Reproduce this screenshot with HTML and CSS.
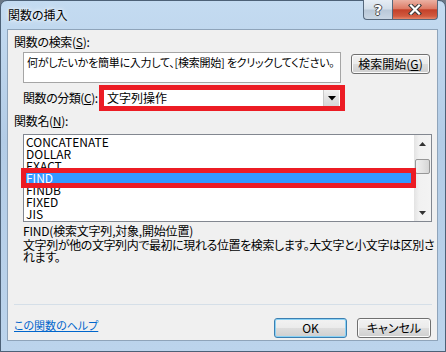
FILE: index.html
```html
<!DOCTYPE html>
<html lang="ja">
<head>
    <meta charset="UTF-8">
    <title>関数の挿入</title>
    <link rel="stylesheet" href="styles.css">
</head>
<body>

    <div class="window">
        <div class="titlebar">
            <span class="title">関数の挿入</span>
            <div class="caption-buttons">
                <span class="caption-btn help-btn">?</span>
                <span class="caption-btn close-btn">
                    <svg width="14" height="11" viewBox="0 0 14 11">
                        <path d="M3 1.5 L11 9.5 M11 1.5 L3 9.5" stroke="#3a3a3a" stroke-width="4.2" stroke-linecap="square"/>
                        <path d="M3 1.5 L11 9.5 M11 1.5 L3 9.5" stroke="#fff" stroke-width="2.2" stroke-linecap="square"/>
                    </svg>
                </span>
            </div>
        </div>

        <div class="client">
            <div class="label search-label">関数の検索(<u>S</u>):</div>

            <div class="search-row">
                <div class="search-box">何がしたいかを簡単に入力して、[検索開始] をクリックしてください。</div>
                <button class="btn search-btn">検索開始(<u>G</u>)</button>
            </div>

            <div class="category-row">
                <span class="label category-label">関数の分類(<u>C</u>):</span>
                <div class="mark">
                    <div class="combo">
                        <span class="combo-text">文字列操作</span>
                        <span class="combo-drop">
                            <svg width="8" height="5" viewBox="0 0 8 5"><polygon points="0,0 8,0 4,4.5" fill="#000"/></svg>
                        </span>
                    </div>
                </div>
            </div>

            <div class="label list-label">関数名(<u>N</u>):</div>

            <div class="listbox">
                <ul class="items">
                    <li>CONCATENATE</li>
                    <li>DOLLAR</li>
                    <li>EXACT</li>
                    <li class="selected">FIND</li>
                    <li>FINDB</li>
                    <li>FIXED</li>
                    <li>JIS</li>
                </ul>
                <div class="scrollbar">
                    <span class="scroll-arrow">
                        <svg width="7" height="4" viewBox="0 0 7 4"><polygon points="0,4 7,4 3.5,0" fill="#333"/></svg>
                    </span>
                    <span class="scroll-track"><span class="scroll-thumb"></span></span>
                    <span class="scroll-arrow">
                        <svg width="7" height="4" viewBox="0 0 7 4"><polygon points="0,0 7,0 3.5,4" fill="#333"/></svg>
                    </span>
                </div>
                <div class="mark mark-row"></div>
            </div>

            <div class="signature">FIND(検索文字列,対象,開始位置)</div>
            <div class="description">文字列が他の文字列内で最初に現れる位置を検索します。大文字と小文字は区別さ<br>れます。</div>

            <div class="separator"></div>

            <div class="footer">
                <a class="help-link" href="#">この関数のヘルプ</a>
                <button class="btn btn-default ok-btn">OK</button>
                <button class="btn cancel-btn">キャンセル</button>
            </div>
        </div>
    </div>

</body>
</html>
```

FILE: styles.css
```css
* {
    box-sizing: border-box;
}

body {
    margin: 0;
    font-family: "Noto Sans CJK JP", sans-serif;
    font-size: 12px;
    font-feature-settings: "palt";
    color: #000;
    background-color: #6b7886;
}

.window {
    width: 446px;
    height: 352px;
    display: flex;
    flex-direction: column;
    padding: 0 7px 10px 6px;
    border: 1px solid #4d6177;
    border-radius: 7px 7px 0 0;
    background: linear-gradient(180deg, #c4dbf1 0%, #b3cce6 40%, #bcd4ec 100%);
}

.titlebar {
    height: 28px;
    display: flex;
    justify-content: space-between;
    align-items: flex-start;
}

.title {
    margin: 6px 0 0 1px;
    line-height: 16px;
    text-shadow: 0 0 6px #fff, 0 0 3px #fff;
}

.caption-buttons {
    display: flex;
    margin-top: -1px;
}

.caption-btn {
    height: 20px;
    display: flex;
    align-items: center;
    justify-content: center;
    border: 1px solid #56687c;
    border-top: none;
}

.help-btn {
    width: 29px;
    border-right: none;
    border-radius: 0 0 0 4px;
    background: linear-gradient(180deg, #e6edf5 0%, #d3dee9 48%, #b9c8d8 52%, #c9d6e4 100%);
    color: #fff;
    font-family: "DejaVu Sans", sans-serif;
    font-weight: bold;
    font-size: 14px;
    text-shadow: -1px 0 #4a4a4a, 1px 0 #4a4a4a, 0 -1px #4a4a4a, 0 1px #4a4a4a;
}

.close-btn {
    width: 46px;
    border-radius: 0 0 4px 0;
    background: linear-gradient(180deg, #ebb1a3 0%, #dd7b66 45%, #c4412a 52%, #d15a3f 85%, #e7876b 100%);
}

.client {
    flex: 1;
    display: flex;
    flex-direction: column;
    padding: 0 5px 2px 6px;
    border: 1px solid #8fa4ba;
    background-color: #f0f0f0;
}

.label {
    line-height: 14px;
    letter-spacing: -0.3px;
    white-space: nowrap;
}

.search-label {
    margin-top: 5px;
}

.search-row {
    display: flex;
    align-items: flex-start;
    margin-top: 3px;
}

.search-box {
    width: 318px;
    height: 31px;
    margin-left: 9px;
    padding: 2px 3px;
    font-size: 11px;
    line-height: 14px;
    white-space: nowrap;
    letter-spacing: -0.25px;
    background-color: #fff;
    border: 1px solid #a5a5a5;
}

.btn {
    height: 20px;
    padding: 0;
    font-family: inherit;
    font-size: 12px;
    font-feature-settings: "palt";
    line-height: 16px;
    color: #000;
    border: 1px solid #707070;
    border-radius: 3px;
    box-shadow: inset 0 0 0 1px #fbfbfb;
    background: linear-gradient(180deg, #f2f2f2 0%, #ebebeb 48%, #dddddd 52%, #cfcfcf 100%);
}

.search-btn {
    width: 79px;
    margin: 2px 0 0 10px;
}

.category-row {
    display: flex;
    align-items: center;
    margin-top: 2px;
    height: 26px;
}

.category-label {
    width: 76px;
    margin-left: 9px;
    letter-spacing: -0.45px;
}

.mark {
    border: 5px solid #ec1c24;
}

.combo {
    width: 236px;
    height: 16px;
    display: flex;
    justify-content: space-between;
    background-color: #fff;
}

.combo-text {
    padding-left: 3px;
    line-height: 16px;
}

.combo-drop {
    width: 16px;
    height: 16px;
    margin-right: 1px;
    display: flex;
    align-items: center;
    justify-content: center;
    background: linear-gradient(180deg, #f2f2f2 0%, #e3e3e3 50%, #d6d6d6 100%);
    border-left: 1px solid #c9c9c9;
}

.list-label {
    margin-top: 3px;
}

.listbox {
    position: relative;
    width: 409px;
    height: 88px;
    margin: 6px 0 0 9px;
    display: flex;
    border: 1px solid #828790;
    background-color: #fff;
}

.items {
    list-style: none;
    margin: 0;
    padding: 1px 0 0 0;
    width: 390px;
}

.items li {
    height: 12px;
    line-height: 12px;
    padding-left: 2px;
}

.items li.selected {
    background-color: #3399ff;
    color: #fff;
}

.scrollbar {
    width: 17px;
    display: flex;
    flex-direction: column;
    background: linear-gradient(90deg, #e3e3e3 0%, #f1f1f1 30%, #f3f3f3 100%);
}

.scroll-arrow {
    height: 17px;
    display: flex;
    align-items: center;
    justify-content: center;
}

.scroll-track {
    flex: 1;
    padding: 7px 1px 0 1px;
}

.scroll-thumb {
    display: block;
    height: 15px;
    border: 1px solid #979797;
    border-radius: 2px;
    background: linear-gradient(90deg, #f0f0f0 0%, #e4e4e4 50%, #d6d6d6 100%);
}

.mark-row {
    position: absolute;
    left: -3px;
    top: 33px;
    width: 395px;
    height: 20px;
}

.signature {
    margin: 2px 0 0 9px;
    line-height: 14px;
    letter-spacing: -0.2px;
}

.description {
    margin: 1px 0 0 9px;
    line-height: 12px;
    letter-spacing: -0.4px;
    white-space: nowrap;
}

.separator {
    margin-top: auto;
    height: 1px;
    background-color: #d5dfe8;
}

.footer {
    display: flex;
    align-items: flex-start;
    margin-top: 13px;
    padding-right: 1px;
}

.help-link {
    line-height: 14px;
    font-size: 11px;
    color: #0066cc;
    margin-right: auto;
}

.ok-btn {
    width: 73px;
}

.cancel-btn {
    width: 74px;
    margin-left: 10px;
}

.btn-default {
    border-color: #3c7fb1;
    box-shadow: inset 0 0 0 1px #8ad2f5;
}
```
